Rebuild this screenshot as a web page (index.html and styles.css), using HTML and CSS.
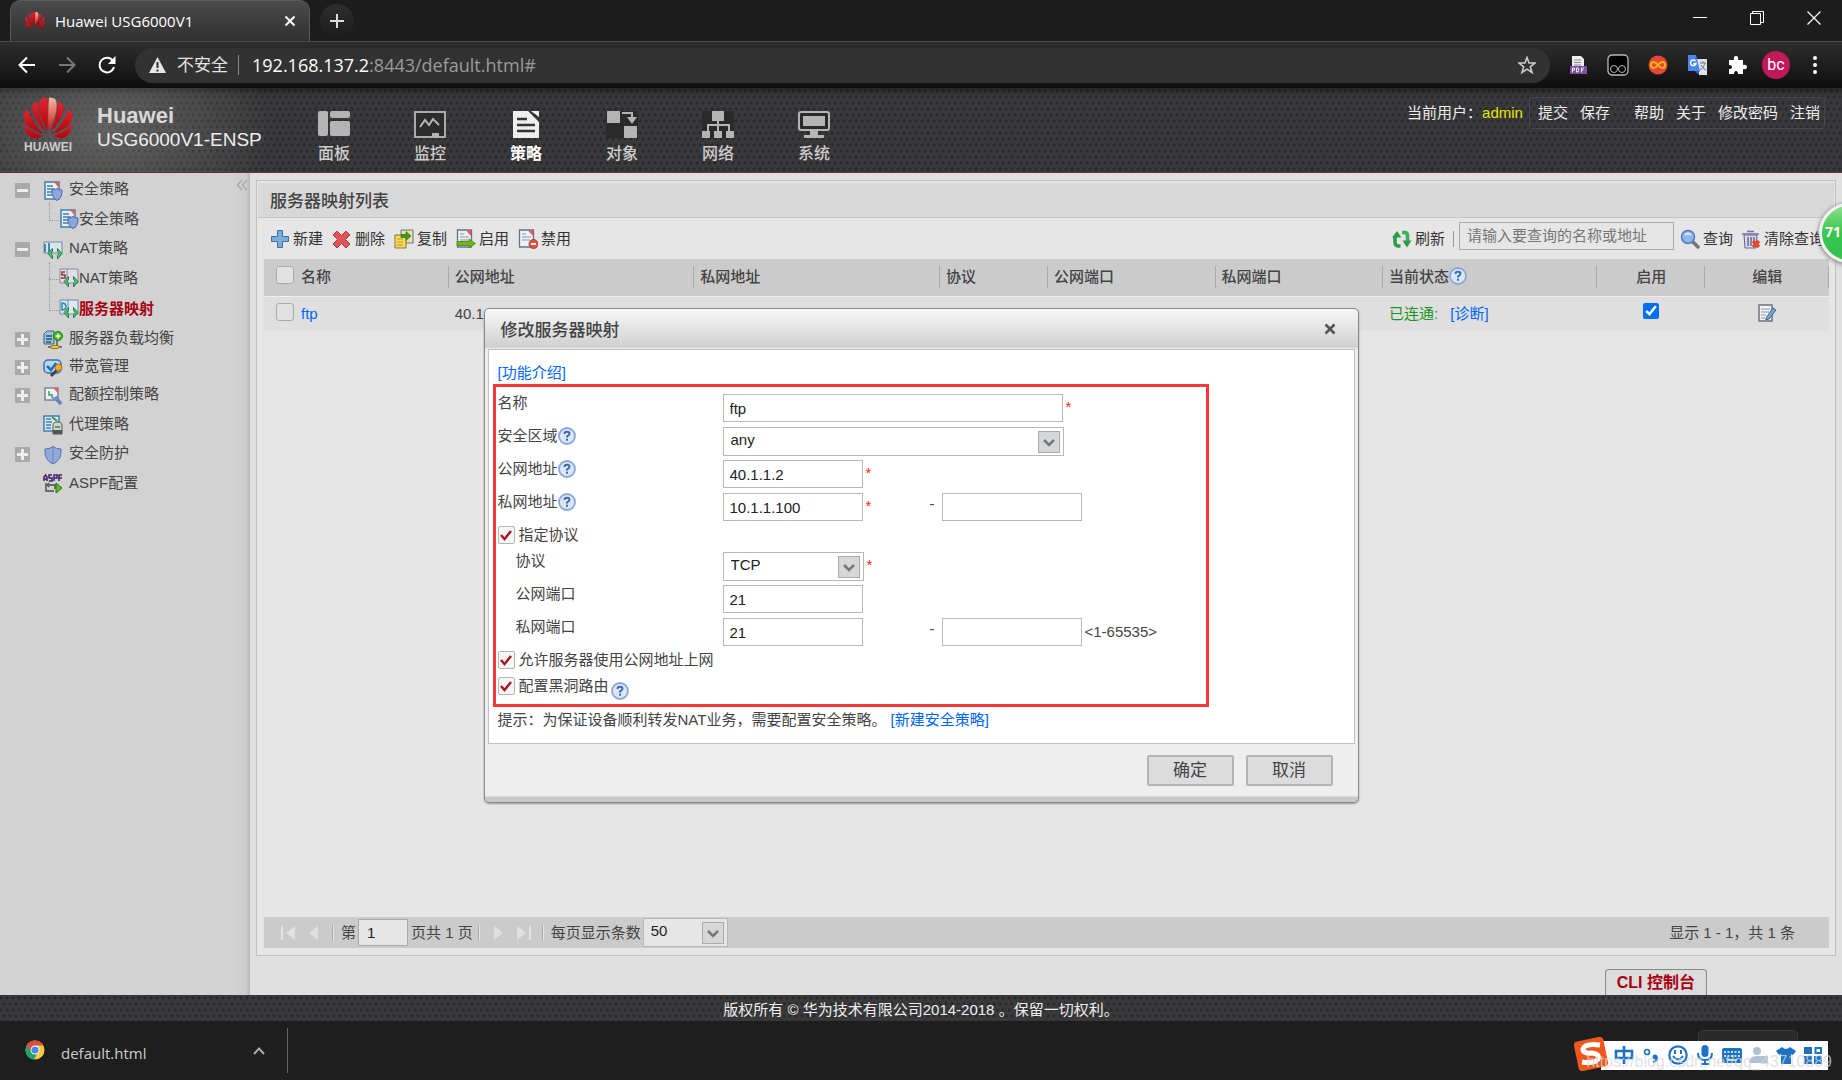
FILE: index.html
```html
<!DOCTYPE html>
<html lang="zh-CN">
<head>
<meta charset="utf-8">
<title>Huawei USG6000V1</title>
<link rel="stylesheet" href="styles.css">
</head>
<body>
<svg class="defs" aria-hidden="true">
  <defs>
    <linearGradient id="petal" x1="0" y1="0" x2="0" y2="1"><stop offset="0" stop-color="#e8222a"/><stop offset="1" stop-color="#b4000c"/></linearGradient>
    <linearGradient id="shine" x1="0" y1="0" x2="0" y2="1"><stop offset="0" stop-color="#f3b9a0"/><stop offset="1" stop-color="#d0101c"/></linearGradient>
    <g id="half">
      <path d="M24 36C16 28 9 18 10 8 12 6 14 5 16 5 15 16 20 28 24 36Z"/>
      <path d="M22 38C12 35 2 29 1 20 1 17 2 15 5 12 8 23 15 32 22 38Z"/>
      <path d="M21 40C15 43 8 43 5 38 3 35 1 31 0 27 8 35 15 38 21 40Z"/>
    </g>
    <symbol id="huawei" viewBox="0 0 52 43">
      <g fill="url(#petal)"><use href="#half"/><use href="#half" transform="matrix(-1 0 0 1 52 0)"/><path d="M25 35C20 24 15 12 18 3 20 1 23 0 25 1 26 12 26 26 25 35Z"/></g>
      <path fill="url(#shine)" d="M27 35C32 24 37 12 34 3 32 1 29 0 27 1 26 12 26 26 27 35Z"/>
    </symbol>
    <symbol id="doc" viewBox="0 0 20 20"><path d="M2 1H16V18H2Z" fill="#e9f1f8" stroke="#3f7fae" stroke-width="1.5"/><path d="M11 1H16V7Z" fill="#f05a5a"/><path d="M4 5H10M4 8H12M4 11H12M4 14H9" stroke="#3f7fae" stroke-width="1.4"/></symbol>
    <symbol id="policy" viewBox="0 0 20 20"><use href="#doc"/><path d="M9 9Q12 9 14 7.500 16 9 19 9 19.500 17 14 19.500 8.500 17 9 9Z" fill="#8ea6dc" stroke="#4d68ab"/></symbol>
    <symbol id="natarrows" viewBox="0 0 20 20"><path d="M9.500 8.500 5 13.500 9.500 19V15.500L8 13.500 9.500 11.500ZM14.500 8.500 19 13.500 14.500 19V15.500L16 13.500 14.500 11.500Z" fill="#4fc274" stroke="#208540"/></symbol>
    <symbol id="nat" viewBox="0 0 20 20"><path d="M1 2H19V13H1Z" fill="#d9e6ee" stroke="#74899b"/><path d="M2 4V12M6 3V12" stroke="#4588b4" stroke-width="2"/><use href="#natarrows"/></symbol>
    <symbol id="snat" viewBox="0 0 20 20"><path d="M1 1H19V15H1Z" fill="#e4dcea" stroke="#84889b"/><path d="M8 1V15" stroke="#84889b"/><path d="M6 4H3V7H6V10H2" fill="none" stroke="#8d3b2f" stroke-width="1.500"/><use href="#natarrows"/></symbol>
    <symbol id="dnat" viewBox="0 0 20 20"><path d="M1 1H19V15H1Z" fill="#dce9f1" stroke="#74899b"/><path d="M9 1V15" stroke="#74899b"/><path d="M3 4V11Q7 11 7 7.500 7 4 3 4Z" fill="none" stroke="#2684c4" stroke-width="1.500"/><use href="#natarrows"/></symbol>
    <symbol id="slb" viewBox="0 0 20 20"><path d="M1 4 4 1H11V14H1Z" fill="#9fc4e0" stroke="#3b5f86"/><path d="M3 6H9M3 9H9M3 12H8" stroke="#27527f" stroke-width="1.400"/><path d="M14 9V16M5 17H19" stroke="#777" stroke-width="2"/><rect x="8" y="15.500" width="8" height="3" rx="1" fill="#f0c63c" stroke="#9d7a1c"/><circle cx="15" cy="6" r="4.500" fill="#3db818" stroke="#238207"/><path d="M15 3.500V8.500M12.500 6H17.500" stroke="#fff" stroke-width="1.500"/></symbol>
    <symbol id="bandwidth" viewBox="0 0 20 20"><rect x="1" y="2" width="17" height="13" rx="4" fill="#b6d8f0" stroke="#3c6fae" stroke-width="1.500"/><path d="M4 8 8 12 13 5" fill="none" stroke="#1d74b8" stroke-width="2.500"/><path d="M8 18 14 12" stroke="#444" stroke-width="3"/><circle cx="15.500" cy="9.500" r="3.500" fill="#f0a63a" stroke="#a86a15"/></symbol>
    <symbol id="quota" viewBox="0 0 20 20"><path d="M2 2H15V14H2Z" fill="#eef2f4" stroke="#7c8790" stroke-width="1.500"/><path d="M10 2H15V7Z" fill="#f05a5a"/><path d="M6 5V9H10" fill="none" stroke="#38a54d" stroke-width="1.500"/><path d="M12 11 18 18" stroke="#5c89bd" stroke-width="3.500"/><path d="M9 8V11L11 13H14" fill="none" stroke="#6c97c6" stroke-width="2"/></symbol>
    <symbol id="proxy" viewBox="0 0 20 20"><path d="M1 1H16V16H1Z" fill="#d8e8f4" stroke="#3f7fae" stroke-width="1.500"/><path d="M3 4H8M3 7H9M3 10H8M3 13H8" stroke="#3f7fae" stroke-width="1.400"/><path d="M9 2 14 6" stroke="#3aa23c" stroke-width="2"/><path d="M10 10Q10 7 14.500 7T19 10V19H10Z" fill="#d2d4cf" stroke="#555"/><path d="M10 15H19V19H10Z" fill="#555"/><path d="M12 12H17" stroke="#2c8a38" stroke-width="1.500"/></symbol>
    <symbol id="shield" viewBox="0 0 20 20"><path d="M2 4Q7 4 10 1.500 13 4 18 4 19 15 10 19 1 15 2 4Z" fill="#91a9dc" stroke="#5670b0"/><path d="M10 2V18" stroke="#6f88c4"/></symbol>
    <symbol id="aspf" viewBox="0 0 20 20"><path d="M1 7V3L2.500 1 4 3V7M1 5H4M9 1H6V4H9V7H6M11 7V1H14V4H11M16 7V1H19M16 4H19" fill="none" stroke="#43206e" stroke-width="1.500"/><path d="M3 9V17H11M12 15V11H6M6 9 4.500 11 6 13" fill="none" stroke="#405048" stroke-width="1.400"/><path d="M13 9 19 14 13 19Z" fill="#65b82c" stroke="#2b6f12"/></symbol>
    <symbol id="plus" viewBox="0 0 20 20"><path d="M7.500 1.500H12.500V7.500H18.500V12.500H12.500V18.500H7.500V12.500H1.500V7.500H7.500Z" fill="#78aedb" stroke="#3f709f"/></symbol>
    <symbol id="cross" viewBox="0 0 20 20"><path d="M5 2 9.500 6.500 14 2 18 6 13.500 10.500 18 15 14 19 9.500 14.500 5 19 1 15 5.500 10.500 1 6Z" fill="#dd5555" stroke="#b03b3b"/></symbol>
    <symbol id="copy" viewBox="0 0 20 20"><path d="M7 1H19V14H7Z" fill="#f3e392" stroke="#626aa0"/><path d="M1 6H12V19H1Z" fill="#f6da5e" stroke="#8a7630"/><path d="M3 10H9M3 13H9M3 16H9" stroke="#c39b29"/><path d="M7 5.500H12V2.500L17 7 12 11.500V8.500H7Z" fill="#3a9b2b" stroke="#226a18" stroke-width=".6"/></symbol>
    <symbol id="sheet" viewBox="0 0 20 20"><path d="M1.500 1H15.500V18H1.500Z" fill="#edf0f5" stroke="#68718c" stroke-width="1.300"/><path d="M10 1.500H15V7Z" fill="#ee5b57"/><path d="M4 5H8M4 8H13M4 11H12" stroke="#a9b3c6" stroke-width="1.300"/></symbol>
    <symbol id="enable" viewBox="0 0 20 20"><use href="#sheet"/><path d="M1 12.500H13V10L19.500 14.500 13 19V16.500H1Z" fill="#6fb51c" stroke="#47800c" stroke-width=".8"/></symbol>
    <symbol id="disable" viewBox="0 0 20 20"><use href="#sheet"/><circle cx="15.500" cy="15" r="4.500" fill="#e2503e" stroke="#a92e20" stroke-width=".8"/><path d="M13 15H18" stroke="#fff" stroke-width="1.800"/></symbol>
    <symbol id="refresh" viewBox="0 0 20 20"><path d="M8.500 17H6Q3 17 3 13V8" fill="none" stroke="#2f9a4c" stroke-width="3.600"/><path d="M0 8.500 5 2 9.500 8.500Z" fill="#2f9a4c"/><path d="M10 3.500H13Q15.500 3.500 15.500 7V12" fill="none" stroke="#3fae5e" stroke-width="3.600"/><path d="M10.500 11.500H19.500L15 18.500Z" fill="#2f9a4c"/></symbol>
    <symbol id="search" viewBox="0 0 20 20"><path d="M13 13 18 18" stroke="#777" stroke-width="3.500" stroke-linecap="round"/><circle cx="8" cy="8" r="6.500" fill="#8db6ef" stroke="#5878bd" stroke-width="1.500"/><path d="M5 6Q8 3 11 6" stroke="#d9e9fc" stroke-width="2" fill="none"/></symbol>
    <symbol id="trash" viewBox="0 0 20 20"><path d="M3 6H16L15 19H4Z" fill="#dcdde8" stroke="#62638d"/><path d="M1 5H18M6 2.500H13M7 8V17M10 8V17M13 8V12" stroke="#73749c" stroke-width="1.700"/><path d="M12 12 18 18M18 12 12 18" stroke="#e4492f" stroke-width="3.600"/></symbol>
    <symbol id="edit" viewBox="0 0 20 20"><path d="M2 2H15V18H2Z" fill="#f4f5f6" stroke="#6c747c" stroke-width="1.500"/><path d="M4 6H13M4 9H12M4 12H9M4 15H8" stroke="#8a9299"/><path d="M9 15 16 5 19 7 12 16 9 17Z" fill="#79a9d6" stroke="#38648f"/></symbol>
    <symbol id="help" viewBox="0 0 18 18"><circle cx="9" cy="9" r="8" fill="#dce7f6" stroke="#8aa6dc" stroke-width="1.800"/><path d="M6.500 7Q6.500 4.700 9 4.700T11.500 6.800Q11.500 8 9 9.500V10.500" fill="none" stroke="#3d69b2" stroke-width="2"/><rect x="8" y="11.700" width="2" height="2" fill="#3d69b2"/></symbol>
    <symbol id="chev" viewBox="0 0 20 20"><path d="M5 8 10 13 15 8" fill="none" stroke="#777" stroke-width="2.500"/></symbol>
  </defs>
</svg>

<div class="tabstrip">
  <div class="tab">
    <svg class="tab-logo"><use href="#huawei"/></svg>
    <span class="tab-title">Huawei USG6000V1</span>
    <button class="plain" aria-label="关闭标签页"><svg width="12" height="12" viewBox="0 0 12 12"><path d="M1.500 1.500 10.500 10.500M10.500 1.500 1.500 10.500" stroke="#fff" stroke-width="2"/></svg></button>
  </div>
  <button class="plain newtab" aria-label="新标签页"><svg width="16" height="16" viewBox="0 0 16 16"><path d="M8 1V15M1 8H15" stroke="#ddd" stroke-width="2"/></svg></button>
  <div class="winctl">
    <button class="plain" aria-label="最小化"><svg width="14" height="14" viewBox="0 0 14 14"><path d="M0 6.500H14" stroke="#fff"/></svg></button>
    <button class="plain" aria-label="还原"><svg width="14" height="14" viewBox="0 0 14 14"><path d="M.5 2.500H10.500V13.500H.5ZM2.500 2.500V.5H13.500V11.500H10.500" fill="none" stroke="#fff"/></svg></button>
    <button class="plain" aria-label="关闭"><svg width="14" height="14" viewBox="0 0 14 14"><path d="M.5.5 13.500 13.500M13.500.5.5 13.500" stroke="#fff" stroke-width="1.200"/></svg></button>
  </div>
</div>

<div class="toolbar">
  <button class="plain" aria-label="后退"><svg width="18" height="18" viewBox="0 0 18 18"><path d="M17 9H2M9 1.500 1.500 9 9 16.500" fill="none" stroke="#fff" stroke-width="2"/></svg></button>
  <button class="plain" aria-label="前进"><svg width="18" height="18" viewBox="0 0 18 18"><path d="M1 9H16M9 1.500 16.500 9 9 16.500" fill="none" stroke="#777" stroke-width="2"/></svg></button>
  <button class="plain" aria-label="刷新"><svg width="18" height="18" viewBox="0 0 18 18"><path d="M15 5A7.300 7.300 0 1 0 16 11" fill="none" stroke="#fff" stroke-width="2"/><path d="M17.500 0V8H10Z" fill="#fff"/></svg></button>
  <div class="address">
    <svg width="17" height="16" viewBox="0 0 17 16"><path d="M8.500 0 17 16H0Z" fill="#e6e6e6"/><path d="M8.500 5V11M8.500 12.500V14.500" stroke="#323232" stroke-width="2"/></svg>
    <span class="insecure">不安全</span><i></i>
    <span class="url"><b>192.168.137.2</b>:8443/default.html#</span>
    <button class="plain" aria-label="收藏"><svg width="18" height="18" viewBox="0 0 18 18"><path d="M9 1.500 11 7 17 7 12.300 10.800 14 16.500 9 13.200 4 16.500 5.700 10.800 1 7 7 7Z" fill="none" stroke="#ccc" stroke-width="1.600"/></svg></button>
  </div>
  <div class="exts">
    <svg width="20" height="20" viewBox="0 0 20 20"><path d="M4 1H13L16 4V12H4Z" fill="#eee"/><path d="M6 5H13M6 7.500H13M6 10H13" stroke="#888"/><rect x="2" y="11" width="17" height="8" fill="#7c4fa0"/><path d="M4.500 17.500V13H6.500V15H4.500M8.500 13V17H10Q11.500 15 10 13ZM13.500 17.500V13H16M13.500 15H15.500" fill="none" stroke="#eee"/></svg>
    <svg width="22" height="22" viewBox="0 0 22 22"><rect x="1" y="1" width="20" height="20" rx="4" fill="#000" stroke="#bbb" stroke-width="1.300"/><circle cx="7" cy="15" r="3.500" fill="none" stroke="#bbb"/><circle cx="15" cy="15" r="3.500" fill="none" stroke="#bbb"/></svg>
    <svg width="20" height="20" viewBox="0 0 20 20"><circle cx="10" cy="10" r="9.500" fill="#e5443a"/><path d="M10 10C7 6 3 6 3 10S7 14 10 10 17 6 17 10 13 14 10 10Z" fill="none" stroke="#f4b40a" stroke-width="2"/></svg>
    <svg width="21" height="20" viewBox="0 0 21 20"><path d="M9 4H20V20H12Z" fill="#dfe1e4"/><path d="M13 8H19M16 6V8M18 8Q17 13 13 15M14 10Q16 14 19 15" stroke="#6d7f93" fill="none"/><path d="M1 0H9L13 16H1Z" fill="#4a86ee"/><path d="M8 16H13L10 19Z" fill="#2557b9"/><path d="M8.500 6A2.800 2.800 0 1 0 9 8.500H6.500" fill="none" stroke="#fff" stroke-width="1.500"/></svg>
    <svg width="20" height="20" viewBox="0 0 20 20"><path d="M2 5H7Q6 1 9 1T11 5H16V10Q20 9 20 12T16 14V19H11Q11 16 9 16T7 19H2V14Q5 14 5 12T2 10Z" fill="#fff"/></svg>
    <span class="avatar">bc</span>
    <svg width="20" height="20" viewBox="0 0 20 20" fill="#fff"><circle cx="10" cy="3" r="2"/><circle cx="10" cy="10" r="2"/><circle cx="10" cy="17" r="2"/></svg>
  </div>
</div>

<header class="header">
  <div class="brand"><svg width="52" height="42"><use href="#huawei"/></svg><span>HUAWEI</span></div>
  <div class="product"><strong>Huawei</strong><span>USG6000V1-ENSP</span></div>
  <nav class="nav">
    <a href="#"><svg width="32" height="27" viewBox="0 0 32 27" fill="#b4b4b4"><rect width="10" height="25" rx="2"/><rect x="12" width="20" height="7" rx="2"/><rect x="12" y="10" width="20" height="15" rx="2"/></svg>面板</a>
    <a href="#"><svg width="32" height="27" viewBox="0 0 32 27"><rect x="1" y="1" width="30" height="25" fill="#2c2c2c" stroke="#aaa" stroke-width="2"/><path d="M6 16 11 9 15 14 19 8 25 14" fill="none" stroke="#b4b4b4" stroke-width="2"/><path d="M18 22H25V26H18Z" fill="#b4b4b4"/></svg>监控</a>
    <a href="#" class="on"><svg width="32" height="27" viewBox="0 0 32 27"><path d="M3 0H18L29 11V27H3Z" fill="#eee"/><path d="M21 0H29V6Z" fill="#eee"/><path d="M7 8H17M7 14H25M7 20H25" stroke="#333" stroke-width="2.500"/></svg>策略</a>
    <a href="#"><svg width="32" height="27" viewBox="0 0 32 27"><path d="M0 0H32V27H0Z" fill="#2a2a2a"/><path d="M1 0H14V12H1ZM18 15H31V27H18Z" fill="#b4b4b4"/><path d="M16 2H26V6" fill="none" stroke="#b4b4b4" stroke-width="2"/><path d="M21 6H31L26 13Z" fill="#b4b4b4"/></svg>对象</a>
    <a href="#"><svg width="32" height="27" viewBox="0 0 32 27"><path d="M0 0H32V27H0Z" fill="#2a2a2a"/><path d="M10 0H22V10H10ZM0 20H8V27H0ZM12 20H20V27H12ZM24 20H32V27H24Z" fill="#b4b4b4"/><path d="M16 10V20M6 20V14H27V20" fill="none" stroke="#b4b4b4" stroke-width="2"/></svg>网络</a>
    <a href="#"><svg width="32" height="27" viewBox="0 0 32 27"><rect x="1" y="1" width="30" height="18" rx="2" fill="#2a2a2a" stroke="#b4b4b4" stroke-width="2"/><path d="M5 5H27V15H5ZM12 20H20V24H26V27H6V24H12Z" fill="#b4b4b4"/></svg>系统</a>
  </nav>
  <div class="user">
    <span>当前用户：</span><em>admin</em>
    <div class="links"><a href="#">提交</a><a href="#">保存</a><a href="#" class="gap">帮助</a><a href="#">关于</a><a href="#">修改密码</a><a href="#">注销</a></div>
  </div>
</header>

<div class="main">
  <aside class="side">
    <ul class="tree">
      <li><div class="node"><button class="tog minus" aria-label="收起"></button><svg><use href="#policy"/></svg><a href="#">安全策略</a></div>
        <ul><li class="leaf"><svg><use href="#policy"/></svg><a href="#">安全策略</a></li></ul></li>
      <li><div class="node"><button class="tog minus" aria-label="收起"></button><svg><use href="#nat"/></svg><a href="#">NAT策略</a></div>
        <ul><li class="leaf"><svg><use href="#snat"/></svg><a href="#">NAT策略</a></li>
        <li class="leaf"><svg><use href="#dnat"/></svg><a href="#" class="current">服务器映射</a></li></ul></li>
      <li class="node"><button class="tog" aria-label="展开"></button><svg><use href="#slb"/></svg><a href="#">服务器负载均衡</a></li>
      <li class="node"><button class="tog" aria-label="展开"></button><svg><use href="#bandwidth"/></svg><a href="#">带宽管理</a></li>
      <li class="node"><button class="tog" aria-label="展开"></button><svg><use href="#quota"/></svg><a href="#">配额控制策略</a></li>
      <li class="node single"><svg><use href="#proxy"/></svg><a href="#">代理策略</a></li>
      <li class="node"><button class="tog" aria-label="展开"></button><svg><use href="#shield"/></svg><a href="#">安全防护</a></li>
      <li class="node single"><svg><use href="#aspf"/></svg><a href="#">ASPF配置</a></li>
    </ul>
    <button class="plain fold" aria-label="折叠"><svg width="12" height="12" viewBox="0 0 12 12"><path d="M6 1 1.500 6 6 11M11 1 6.500 6 11 11" fill="none" stroke="#aaa" stroke-width="1.500"/></svg></button>
  </aside>

  <div class="content">
    <section class="panel">
      <h1>服务器映射列表</h1>
      <div class="actions">
        <button class="act"><svg><use href="#plus"/></svg>新建</button>
        <button class="act"><svg><use href="#cross"/></svg>删除</button>
        <button class="act"><svg><use href="#copy"/></svg>复制</button>
        <button class="act"><svg><use href="#enable"/></svg>启用</button>
        <button class="act"><svg><use href="#disable"/></svg>禁用</button>
        <div class="query">
          <button class="act"><svg><use href="#refresh"/></svg>刷新</button>
          <i></i>
          <input type="text" aria-label="查询" placeholder="请输入要查询的名称或地址">
          <button class="act"><svg><use href="#search"/></svg>查询</button>
          <button class="act"><svg><use href="#trash"/></svg>清除查询</button>
        </div>
      </div>
      <table class="grid">
        <colgroup><col class="c1"><col class="c2"><col class="c2"><col class="c3"><col class="c4"><col class="c4"><col class="c5"><col class="c3"><col class="c6"></colgroup>
        <thead><tr><th><label><input type="checkbox" class="box">名称</label></th><th>公网地址</th><th>私网地址</th><th>协议</th><th>公网端口</th><th>私网端口</th><th><span class="withhelp">当前状态<svg><use href="#help"/></svg></span></th><th class="mid">启用</th><th class="mid">编辑</th></tr></thead>
        <tbody><tr><td><label><input type="checkbox" class="box"><a href="#">ftp</a></label></td><td>40.1.1.2</td><td>10.1.1.100</td><td>TCP</td><td>21</td><td>21</td><td><span class="ok">已连通:</span> <a href="#" class="diag">[诊断]</a></td><td class="mid"><input type="checkbox" class="native" aria-label="启用" checked></td><td class="mid"><button class="plain" aria-label="编辑"><svg width="20" height="20"><use href="#edit"/></svg></button></td></tr></tbody>
      </table>
      <div class="pager">
        <button class="plain" aria-label="首页"><svg width="16" height="16" viewBox="0 0 16 16"><path d="M2 1V15" stroke="#e4e4e4" stroke-width="2"/><path d="M15 1V15L6 8Z" fill="#e0e0e0"/></svg></button>
        <button class="plain" aria-label="上一页"><svg width="16" height="16" viewBox="0 0 16 16"><path d="M12 1V15L3 8Z" fill="#e0e0e0"/></svg></button>
        <i></i><label for="pg">第</label><input id="pg" type="text" value="1"><span>页共 1 页</span><i></i>
        <button class="plain" aria-label="下一页"><svg width="16" height="16" viewBox="0 0 16 16"><path d="M4 1V15L13 8Z" fill="#e0e0e0"/></svg></button>
        <button class="plain" aria-label="末页"><svg width="16" height="16" viewBox="0 0 16 16"><path d="M14 1V15" stroke="#e4e4e4" stroke-width="2"/><path d="M1 1V15L10 8Z" fill="#e0e0e0"/></svg></button>
        <i></i><label for="size">每页显示条数</label>
        <span class="select size"><select id="size"><option>50</option></select><svg><use href="#chev"/></svg></span>
        <span class="total">显示 1 - 1，共 1 条</span>
      </div>
    </section>
    <button class="cli">CLI 控制台</button>
  </div>

  <div class="badge">71</div>

  <div class="overlay">
    <form class="dialog" role="dialog" aria-label="修改服务器映射">
      <div class="dtitle"><h2>修改服务器映射</h2><button type="button" class="plain" aria-label="关闭"><svg width="12" height="12" viewBox="0 0 12 12"><path d="M1.500 1.500 10.500 10.500M10.500 1.500 1.500 10.500" stroke="#555" stroke-width="2.500"/></svg></button></div>
      <div class="dbody">
        <a href="#" class="intro">[功能介绍]</a>
        <div class="marked">
          <div class="row"><label for="f1">名称</label><input id="f1" class="wide" type="text" value="ftp"><em>*</em></div>
          <div class="row"><label for="f2">安全区域<svg><use href="#help"/></svg></label><span class="select wide"><select id="f2"><option>any</option></select><svg><use href="#chev"/></svg></span></div>
          <div class="row"><label for="f3">公网地址<svg><use href="#help"/></svg></label><input id="f3" type="text" value="40.1.1.2"><em>*</em></div>
          <div class="row"><label for="f4">私网地址<svg><use href="#help"/></svg></label><span class="from"><input id="f4" type="text" value="10.1.1.100"><em>*</em></span><span class="dash">-</span><input type="text" aria-label="私网地址结束"></div>
          <div class="row tick"><label><input type="checkbox" class="red" checked>指定协议</label></div>
          <div class="row sub"><label for="f5">协议</label><span class="select"><select id="f5"><option>TCP</option></select><svg><use href="#chev"/></svg></span><em>*</em></div>
          <div class="row sub"><label for="f6">公网端口</label><input id="f6" type="text" value="21"></div>
          <div class="row sub"><label for="f7">私网端口</label><span class="from"><input id="f7" type="text" value="21"></span><span class="dash">-</span><input type="text" aria-label="私网端口结束"><span class="range">&lt;1-65535&gt;</span></div>
          <div class="row tick"><label><input type="checkbox" class="red" checked>允许服务器使用公网地址上网</label></div>
          <div class="row tick"><label><input type="checkbox" class="red" checked>配置黑洞路由<svg><use href="#help"/></svg></label></div>
        </div>
        <p>提示：为保证设备顺利转发NAT业务，需要配置安全策略。 <a href="#">[新建安全策略]</a></p>
      </div>
      <div class="dfoot"><button type="button">确定</button><button type="button">取消</button></div>
    </form>
  </div>
</div>

<footer class="footer">版权所有 © 华为技术有限公司2014-2018 。保留一切权利。</footer>

<div class="downloads">
  <svg width="20" height="20" viewBox="0 0 20 20"><circle cx="10" cy="10" r="9.500" fill="#f6c945"/><path d="M10 10 1.800 5.200A9.500 9.500 0 0 0 9 19.400L13 12Z" fill="#1da362"/><path d="M10 10 6 12 1.800 5.200A9.500 9.500 0 0 1 18.400 5.500H10Z" fill="#dd4b3e"/><circle cx="10" cy="10" r="4.500" fill="#fff"/><circle cx="10" cy="10" r="3.600" fill="#4a86ee"/></svg>
  <a href="#">default.html</a>
  <button class="plain" aria-label="更多"><svg width="12" height="8" viewBox="0 0 12 8"><path d="M1 7 6 1.500 11 7" fill="none" stroke="#aaa" stroke-width="2"/></svg></button>
  <div class="showall"></div>
  <div class="ime">
    <svg class="sogou" width="36" height="36" viewBox="0 0 36 36"><rect x="3" y="3" width="30" height="30" rx="4" fill="#f0571e" transform="rotate(-12 18 18)"/><path d="M27 9Q12 7 10 13 10 18 19 17 27 18 25 23 22 28 9 26" fill="none" stroke="#fff" stroke-width="5"/></svg>
    <div class="imebar">
      <svg width="20" height="20" viewBox="0 0 20 20"><path d="M2 6H18V13H2ZM10 1V19" fill="none" stroke="#1c73c4" stroke-width="2.600"/></svg>
      <svg width="20" height="20" viewBox="0 0 20 20"><circle cx="6" cy="7" r="2.500" fill="none" stroke="#1c73c4" stroke-width="1.700"/><circle cx="14" cy="12" r="2.500" fill="#1c73c4"/><path d="M16 12Q16 16 12 17" stroke="#1c73c4" stroke-width="2" fill="none"/></svg>
      <svg width="20" height="20" viewBox="0 0 20 20"><circle cx="10" cy="10" r="8.700" fill="none" stroke="#1c73c4" stroke-width="2.200"/><path d="M7 5V9M13 5V9M5 11Q10 18 15 11" fill="none" stroke="#1c73c4" stroke-width="2"/></svg>
      <svg width="20" height="20" viewBox="0 0 20 20"><rect x="6.500" y="0" width="7" height="12" rx="3.500" fill="#1c73c4"/><path d="M3 8Q3 15 10 15T17 8M10 15V19M6 19H14" fill="none" stroke="#1c73c4" stroke-width="2"/></svg>
      <svg width="20" height="20" viewBox="0 0 20 20"><rect y="3" width="20" height="15" rx="2" fill="#1c73c4"/><path d="M2 7H18M2 11H18" stroke="#fff" stroke-width="1.500" stroke-dasharray="2 1.500"/><path d="M5 15H15" stroke="#fff" stroke-width="1.500"/></svg>
      <svg width="20" height="20" viewBox="0 0 20 20" fill="#b3bfd6"><circle cx="8" cy="6" r="4"/><path d="M0 18Q0 11 8 11H19V18Z"/></svg>
      <svg width="20" height="20" viewBox="0 0 20 20"><path d="M6 2Q10 6 14 2L20 6 17 10 15 9V19H5V9L3 10 0 6Z" fill="#1c73c4"/></svg>
      <svg width="20" height="20" viewBox="0 0 20 20"><path d="M1 2H9V9H1ZM1 11H9V19H1ZM11 11H19V19H11Z" fill="#1c73c4"/><path d="M12.500 3H18V8H12.500Z" fill="none" stroke="#1c73c4" stroke-width="2"/></svg>
    </div>
    <span class="mark">https://blog.csdn.net/qq_43710889</span>
  </div>
</div>
</body>
</html>
```

FILE: styles.css
```css
* { box-sizing: border-box; }
html { overflow-x: hidden; }
body {
  margin: 0;
  min-height: 100vh;
  display: flex;
  flex-direction: column;
  background: #1e1e1e;
  color: #444;
  font: 15px/18px "Liberation Sans", "Noto Sans CJK SC", sans-serif;
}
button, input, select { font: inherit; color: inherit; margin: 0; }
a { color: #0066ff; text-decoration: none; }
em { font-style: normal; }
ul { list-style: none; margin: 0; padding: 0; }
svg { flex: none; display: block; }
.defs { position: absolute; width: 0; height: 0; }
.plain { background: none; border: 0; padding: 0; display: flex; align-items: center; justify-content: center; }

/* browser frame */
.tabstrip { height: 41px; display: flex; align-items: center; padding-left: 10px; background: #1c1c1c; }
.tab {
  width: 300px;
  height: 41px;
  display: flex;
  align-items: center;
  padding: 0 13px 0 14px;
  border: 1px solid #5a5a5a;
  border-bottom: 0;
  border-radius: 10px 10px 0 0;
  background: linear-gradient(#4b4b4b, #303030);
  color: #fff;
  font-family: "Open Sans", sans-serif;
}
.tab-logo { width: 20px; height: 18px; margin: 0 10px 2px 0; }
.tab-title { flex: 1; }
.newtab { width: 34px; height: 34px; margin-left: 10px; border-radius: 50%; background: linear-gradient(#2e2e2e, #1c1c1c); }
.winctl { margin-left: auto; display: flex; gap: 43px; padding: 0 21px 5px 0; }
.toolbar {
  height: 47px;
  display: flex;
  align-items: center;
  padding: 0 17px 0 18px;
  border-top: 1px solid #4a4a4a;
  background: linear-gradient(#2e2e2e, #0e0e0e);
}
.toolbar > .plain { width: 18px; margin-right: 22px; }
.address {
  flex: 1;
  height: 35px;
  display: flex;
  align-items: center;
  margin-left: -3px;
  padding: 0 14px;
  border-radius: 18px;
  background: #323232;
  color: #9b9b9b;
  font: 18px/24px "Open Sans", "Noto Sans CJK SC", sans-serif;
}
.insecure { margin-left: 11px; font-size: 17px; color: #e4e4e4; }
.address i { width: 1px; height: 20px; margin: 0 13px 0 10px; background: #888; }
.url { flex: 1; }
.url b { color: #fff; font-weight: 400; }
.exts { display: flex; align-items: center; gap: 19px; margin-left: 18px; }
.avatar {
  width: 28px;
  height: 28px;
  margin: 0 -4px;
  border-radius: 50%;
  background: #c2185b;
  color: #fff;
  font: 16px/27px "Roboto", sans-serif;
  text-align: center;
}

/* product header */
.header, .footer {
  background:
    radial-gradient(circle at 1px 3px, #29292b 1px, transparent 2px) 0 0 / 6px 12px,
    radial-gradient(circle at 4px 9px, #29292b 1px, transparent 2px) 0 0 / 6px 12px,
    #39393b;
}
.header {
  height: 85px;
  display: flex;
  align-items: flex-start;
  padding: 9px 17px 0 22px;
  border-bottom: 1px solid #6b2b2f;
  background:
    radial-gradient(ellipse 170px 110px at 105px 42px, rgba(150, 150, 150, .45), transparent),
    linear-gradient(rgba(0, 0, 0, .35), transparent 8px),
    radial-gradient(circle at 1px 3px, #29292b 1px, transparent 2px) 0 0 / 6px 12px,
    radial-gradient(circle at 4px 9px, #29292b 1px, transparent 2px) 0 0 / 6px 12px,
    #39393b;
}
.brand { width: 52px; color: #ccc; font: bold 12px/16px "Liberation Sans", sans-serif; text-align: center; }
.product { width: 200px; margin-left: 23px; padding-top: 7px; display: flex; flex-direction: column; color: #eee; font-size: 19px; line-height: 23px; }
.product strong { font-size: 22px; line-height: 24px; color: #d8d8d8; }
.nav { display: flex; gap: 32px; margin-left: 5px; padding-top: 14px; }
.nav a { width: 64px; display: flex; flex-direction: column; align-items: center; gap: 4px; color: #ccc; font: 500 16px/20px "Noto Sans CJK SC", sans-serif; }
.nav .on { color: #fff; font-weight: 700; }
.user { margin-left: auto; display: flex; align-items: center; height: 32px; color: #eee; }
.user em { color: #e6e600; margin: 0 6px 0 0; }
.links { display: flex; gap: 12px; padding: 6px 4px 6px 8px; border: 1px solid #48484a; border-radius: 3px; }
.links a { color: #eee; }
.links .gap { margin-left: 12px; }

/* side tree */
.main { position: relative; flex: 1; display: flex; overflow: hidden; background: #e0e0e0; }
.side { width: 250px; display: flex; background: linear-gradient(90deg, #d2d2d2 234px, #cdcdcd 246px, #b8b8b8); }
.tree { flex: 1; padding: 2px 0 0 15px; }
.tree svg { width: 20px; height: 20px; }
.tree a { color: #444; }
.node { height: 28px; display: flex; align-items: center; }
.node svg { margin: 3px 6px 0 13px; }
.single { height: 31px; padding-left: 15px; }
.leaf { height: 31px; display: flex; align-items: center; padding-left: 34px; }
.leaf::before { content: ""; align-self: flex-start; width: 9px; height: 17px; border: dotted #999; border-width: 0 0 1px 1px; }
.leaf + .leaf::before { height: 32px; margin-top: -15px; }
.tree .current { color: #a80010; font-weight: 700; }
.tog { width: 15px; height: 15px; margin-top: 3px; padding: 0; border: 0; background: linear-gradient(#eee, #eee) center / 11px 3px no-repeat, linear-gradient(#eee, #eee) center / 3px 11px no-repeat, #a9a9ac; }
.minus { background: linear-gradient(#eee, #eee) center / 11px 3px no-repeat, #a9a9ac; }
.fold { width: 14px; height: 20px; margin: 2px 1px 0 0; }

/* list panel */
.content { flex: 1; min-width: 0; display: flex; flex-direction: column; padding: 7px 6px 0; }
.panel { flex: 1; display: flex; flex-direction: column; border: 1px solid #bfbfbf; background: #e6e6e6; }
.panel h1 { height: 35px; margin: 2px 1px 0; padding-left: 12px; border-bottom: 1px solid #c6c6c6; background: #d8d8d8; font: 500 17px/34px "Noto Sans CJK SC", sans-serif; color: #444; }
.actions { height: 41px; display: flex; align-items: center; gap: 9px; padding: 0 11px 0 13px; }
.act { display: flex; align-items: center; gap: 3px; padding: 0; border: 0; background: none; color: #333; white-space: nowrap; }
.act svg { width: 20px; height: 20px; }
.query { margin-left: auto; display: flex; align-items: center; gap: 8px; }
.query i { width: 1px; height: 16px; background: #999; }
.query input { width: 215px; height: 28px; margin: 0 -3px 6px; padding: 0 7px; border: 1px solid #aaa; background: #e6e6e6; }
.query input::placeholder { color: #777; }
.query input + .act { margin-left: 1px; }
.grid { margin: 0 6px 0 7px; border-collapse: collapse; table-layout: fixed; width: calc(100% - 13px); }
.c1 { width: 11.8%; } .c2 { width: 15.7%; } .c3 { width: 6.9%; } .c4 { width: 10.7%; } .c5 { width: 13.7%; } .c6 { width: 7.9%; }
.grid th { height: 37px; padding: 0 0 2px 6px; text-align: left; background: linear-gradient(#aaa, #aaa) right / 1px 22px no-repeat #cbcbcb; font: 500 15px/18px "Noto Sans CJK SC", sans-serif; }
.grid td { height: 35px; padding: 0 0 0 6px; border-top: 1px solid #eee; background: #dfdfdf; }
.grid .mid { text-align: center; padding: 0 0 2px; }
.mid .plain { margin: auto; }
.grid label { display: flex; align-items: center; gap: 7px; padding-left: 6px; }
.box { appearance: none; width: 18px; height: 18px; border: 1px solid #aaa; border-radius: 3px; background: #e2e2e2; }
.grid .box { margin-bottom: 3px; }
.native { width: 16px; height: 16px; margin-bottom: 4px; accent-color: #0070f3; vertical-align: middle; }
.withhelp { display: flex; align-items: center; }
.withhelp svg { width: 18px; height: 18px; }
.ok { color: #1a9420; margin-right: 8px; }
.pager { height: 31px; margin: auto 6px 7px 7px; padding-left: 16px; display: flex; align-items: center; background: #cbcbcb; white-space: nowrap; }
.pager .plain { margin-right: 10px; }
.pager i { width: 2px; height: 16px; margin: 0 7px 0 5px; border-left: 1px solid #aaa; border-right: 1px solid #e6e6e6; }
.pager .plain + i { margin-left: 0; }
.pager span + i { margin-right: 10px; }
.pager input { width: 50px; height: 27px; margin: 0 3px 0 2px; padding: 0 8px; border: 1px solid #aaa; background: #e6e6e6; color: #222; }
.total { margin-left: auto; padding-right: 34px; }
.cli { align-self: flex-end; height: 26px; margin: 13px 129px 0 0; padding: 0 11px; border: 1px solid #888; border-bottom: 0; border-radius: 4px 4px 0 0; background: #dcdcdc; color: #a80010; font-weight: 700; font-size: 16px; }

.select { width: 141px; display: grid; align-items: center; }
.select select { grid-area: 1 / 1; width: 100%; height: 29px; padding: 0 7px 3px; appearance: none; border: 1px solid #b8b8bc; border-radius: 0; background: #fff; color: #222; }
.select svg { grid-area: 1 / 1; justify-self: end; width: 22px; height: 22px; margin-right: 4px; border: 1px solid #aaa; background: #d6d7d9; pointer-events: none; }
.select.size { width: 85px; margin-left: 2px; }
.size select { background: #e6e6e6; }

.badge {
  position: absolute;
  top: 30px;
  right: -37px;
  width: 60px;
  height: 60px;
  padding-left: 3px;
  border: 3px solid #f2f2f2;
  border-radius: 50%;
  background: linear-gradient(#8be08a, #38c650 50%, #35c050);
  box-shadow: 0 1px 5px #666;
  color: #fff;
  font: bold 14px/52px "Noto Sans", sans-serif;
}

/* edit dialog */
.overlay { position: absolute; inset: 0; display: flex; justify-content: center; align-items: flex-start; padding-top: 135px; pointer-events: none; }
.dialog { width: 875px; padding: 0 3px 4px; border: 1px solid #888; border-radius: 5px; background: linear-gradient(#f8f8f8, #d0d0d0 38px, #eee 40px, #eee 487px, #c8c8c8 488px); pointer-events: auto; box-shadow: 0 1px 2px #999; }
.dtitle { height: 40px; display: flex; align-items: center; justify-content: space-between; padding: 0 19px 0 13px; }
.dtitle h2 { margin: 0; font: 500 17px/24px "Noto Sans CJK SC", sans-serif; color: #444; }
.dbody { padding: 14px 9px 14px 4px; border: 1px solid #c0c0c4; background: #fff; }
.intro { display: block; padding-left: 5px; }
.marked { width: 716px; margin-top: 2px; padding: 7px 2px 6px; border: 3px solid #fb3838; display: flex; flex-direction: column; gap: 5px; }
.row { height: 28px; display: flex; align-items: flex-start; }
.row label { width: 225px; display: flex; align-items: center; }
.row label svg { width: 18px; height: 18px; }
.row.sub label { padding-left: 18px; }
.row.tick { height: 21px; }
.row.tick label { width: auto; }
.row.tick svg { margin: 5px 0 -5px 2px; }
.row input[type="text"] { width: 140px; height: 28px; padding: 0 6px; border: 1px solid #b8b8bc; background: #fff; color: #222; }
.row .wide[type="text"] { width: 340px; }
.row .select.wide { width: 341px; }
.row em { margin: 4px 0 0 3px; font-size: 15px; line-height: 18px; color: #f22; }
.from { width: 207px; display: flex; }
.dash { width: 12px; padding-top: 2px; }
.range { margin: 5px 0 0 3px; }
.red { appearance: none; width: 17px; height: 18px; margin-right: 4px; border: 1px solid #b5b5b5; border-radius: 2px; background: #f6f6f6; }
.red:checked { background: #f6f6f6 url("data:image/svg+xml,%3Csvg xmlns='http://www.w3.org/2000/svg' viewBox='0 0 14 14'%3E%3Cpath d='M2 7 5.500 11 12 3' fill='none' stroke='%23a81c24' stroke-width='2.600'/%3E%3C/svg%3E") center / 14px no-repeat; }
.dbody p { margin: 4px 0 0 5px; line-height: 18px; }
.dfoot { display: flex; justify-content: flex-end; gap: 12px; padding: 11px 22px 12px; }
.dfoot button { width: 87px; height: 31px; padding: 0; border: 2px solid #b4b4b6; border-radius: 2px; background: #dcdcdc; font-size: 17px; color: #444; }

.footer { height: 26px; color: #eee; line-height: 30px; text-align: center; }

/* downloads shelf and input method bar */
.downloads { position: relative; height: 59px; display: flex; align-items: center; padding-left: 25px; background: #1e1e1e; }
.downloads > svg { margin-bottom: 2px; }
.downloads > a { margin: 4px 0 0 16px; width: 192px; color: #ccc; font: 15px/20px "Open Sans", sans-serif; }
.downloads > .plain { height: 45px; padding-right: 22px; border-right: 1px solid #666; }
.showall { position: absolute; right: 44px; top: 9px; width: 100px; height: 40px; border: 1px solid #3c3c3c; border-radius: 5px; background: #292929; }
.ime { position: absolute; right: 14px; top: 15px; display: flex; align-items: center; }
.sogou { margin-right: -8px; z-index: 1; }
.imebar { display: flex; align-items: center; gap: 7px; height: 29px; margin-top: 2px; padding: 0 5px 0 13px; background: #fff; }
.mark { position: absolute; right: -4px; bottom: 0; z-index: 2; font-size: 16px; line-height: 20px; color: rgba(215, 215, 215, .75); white-space: nowrap; }
```
